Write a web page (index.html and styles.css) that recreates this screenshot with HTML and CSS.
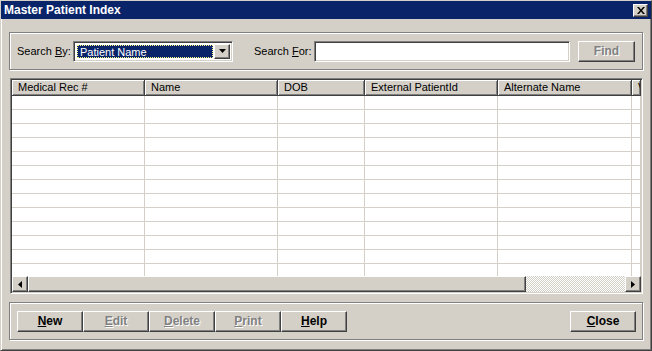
FILE: index.html
```html
<!doctype html>
<html lang="en">
<head>
	<meta charset="UTF-8">
	<title>Master Patient Index</title>
	<link rel="stylesheet" href="styles.css">
</head>
<body>
	<div class="window">
		<div class="titlebar">
			<span class="title">Master Patient Index</span>
			<a href="javascript:;" class="xbtn raised">
				<svg width="8" height="7" viewBox="0 0 8 7"><path d="M0 0h2l2 2.5L6 0h2L5 3.5 8 7H6L4 4.5 2 7H0l3-3.5z" fill="#000"/></svg>
			</a>
		</div>
		<div class="content">
			<div class="group search">
				<label class="lbl lbl-by">Search <u>B</u>y:</label>
				<div class="combo sunken">
					<div class="combo-val"><span>Patient Name</span></div>
					<div class="combo-btn raised">
						<svg width="7" height="4" viewBox="0 0 7 4"><path d="M0 0h7L3.5 4z" fill="#000"/></svg>
					</div>
				</div>
				<label class="lbl lbl-for">Search <u>F</u>or:</label>
				<input class="field sunken" type="text">
				<button class="btn raised disabled find">Find</button>
			</div>

			<div class="grid sunken">
				<div class="head">
					<div class="hcell">Medical Rec #</div>
					<div class="hcell">Name</div>
					<div class="hcell">DOB</div>
					<div class="hcell">External PatientId</div>
					<div class="hcell">Alternate Name</div>
					<div class="hcell">V</div>
				</div>
				<div class="rows" id="rows"></div>
				<div class="hscroll">
					<div class="sbtn raised">
						<svg width="4" height="7" viewBox="0 0 4 7"><path d="M4 0v7L0 3.5z" fill="#000"/></svg>
					</div>
					<div class="thumb raised"></div>
					<div class="track"></div>
					<div class="sbtn raised">
						<svg width="4" height="7" viewBox="0 0 4 7"><path d="M0 0v7l4-3.5z" fill="#000"/></svg>
					</div>
				</div>
			</div>

			<div class="group actions">
				<button class="btn raised"><u>N</u>ew</button>
				<button class="btn raised disabled"><u>E</u>dit</button>
				<button class="btn raised disabled"><u>D</u>elete</button>
				<button class="btn raised disabled"><u>P</u>rint</button>
				<button class="btn raised"><u>H</u>elp</button>
				<button class="btn raised close"><u>C</u>lose</button>
			</div>
		</div>
	</div>
	<script>
	var oRows = document.getElementById('rows');
	var html = '';
	for (var i = 0; i < 13; i++) {
		for (var j = 0; j < 6; j++) {
			html += '<div class="cell"></div>';
		}
	}
	oRows.innerHTML = html;
	</script>
</body>
</html>
```

FILE: styles.css
```css
*{margin:0;padding:0;box-sizing:border-box;}
body{width:652px;height:351px;background:#d4d0c8;font-family:"Liberation Sans",Arial,sans-serif;font-size:11px;color:#000;overflow:hidden;}

.raised{border:1px solid;border-color:#fff #404040 #404040 #fff;box-shadow:inset -1px -1px 0 #808080;background:#d4d0c8;}
.sunken{border:1px solid;border-color:#808080 #fff #fff #808080;box-shadow:inset 1px 1px 0 #404040,inset -1px -1px 0 #d4d0c8;}

.window{width:652px;height:351px;border:1px solid;border-color:#d4d0c8 #404040 #404040 #d4d0c8;box-shadow:inset 1px 1px 0 #fff,inset -1px -1px 0 #808080;display:flex;flex-direction:column;}
.titlebar{height:18px;background:#0a246a;display:flex;align-items:center;justify-content:space-between;padding:0 3px 0 3px;}
.title{color:#fff;font-weight:bold;font-size:12px;}
.xbtn{width:15px;height:13px;display:flex;align-items:center;justify-content:center;margin-top:1px;}

.content{flex:1;padding:13px 8px 10px 8px;display:flex;flex-direction:column;}

.group{border:1px solid #808080;box-shadow:inset 1px 1px 0 #fff,1px 1px 0 #fff;display:flex;align-items:center;height:38px;padding:0 7px;}

.lbl{display:block;}
.lbl u{text-decoration:underline;}
.lbl-by{width:56px;}
.lbl-for{width:60px;margin-left:21px;}

.combo{width:160px;height:21px;display:flex;padding:2px;background:#fff;}
.combo-val{flex:1;padding:1px;}
.combo-val span{display:block;height:100%;background:#0a246a;color:#fff;padding:0 0 0 3px;line-height:14px;outline:1px dotted #ffff80;outline-offset:-1px;}
.combo-btn{width:16px;display:flex;align-items:center;justify-content:center;}

.field{flex:1;height:21px;background:#fff;font:inherit;}
.btn{height:21px;width:66px;font-family:"Liberation Sans",Arial,sans-serif;font-size:12px;font-weight:bold;color:#000;}
.btn.disabled{color:#808080;text-shadow:1px 1px 0 #fff;}
.find{width:57px;margin-left:8px;}

.grid{margin:8px 0 0 1px;height:216px;border-width:1px;padding:1px;display:flex;flex-direction:column;background:#fff;overflow:hidden;}
.head{display:grid;grid-template-columns:133px 133px 87px 133px 134px 1fr;height:16px;flex:none;}
.hcell{background:#d4d0c8;border-right:1px solid #404040;border-bottom:1px solid #404040;box-shadow:inset 1px 1px 0 #fff,inset -1px -1px 0 #808080;padding:0 0 0 6px;line-height:14px;white-space:nowrap;overflow:hidden;}
.rows{flex:1;display:grid;grid-template-columns:133px 133px 87px 133px 134px 1fr;grid-auto-rows:14px;overflow:hidden;}
.cell{border-right:1px solid #d4d0c8;border-bottom:1px solid #d4d0c8;}

.hscroll{height:16px;flex:none;display:flex;}
.sbtn{width:16px;display:flex;align-items:center;justify-content:center;}
.thumb{width:498px;}
.track{flex:1;background:repeating-conic-gradient(#d4d0c8 0 25%,#fff 0 50%) 0 0/2px 2px;}

.actions{margin-top:8px;}
.close{margin-left:auto;margin-right:-1px;}
```
